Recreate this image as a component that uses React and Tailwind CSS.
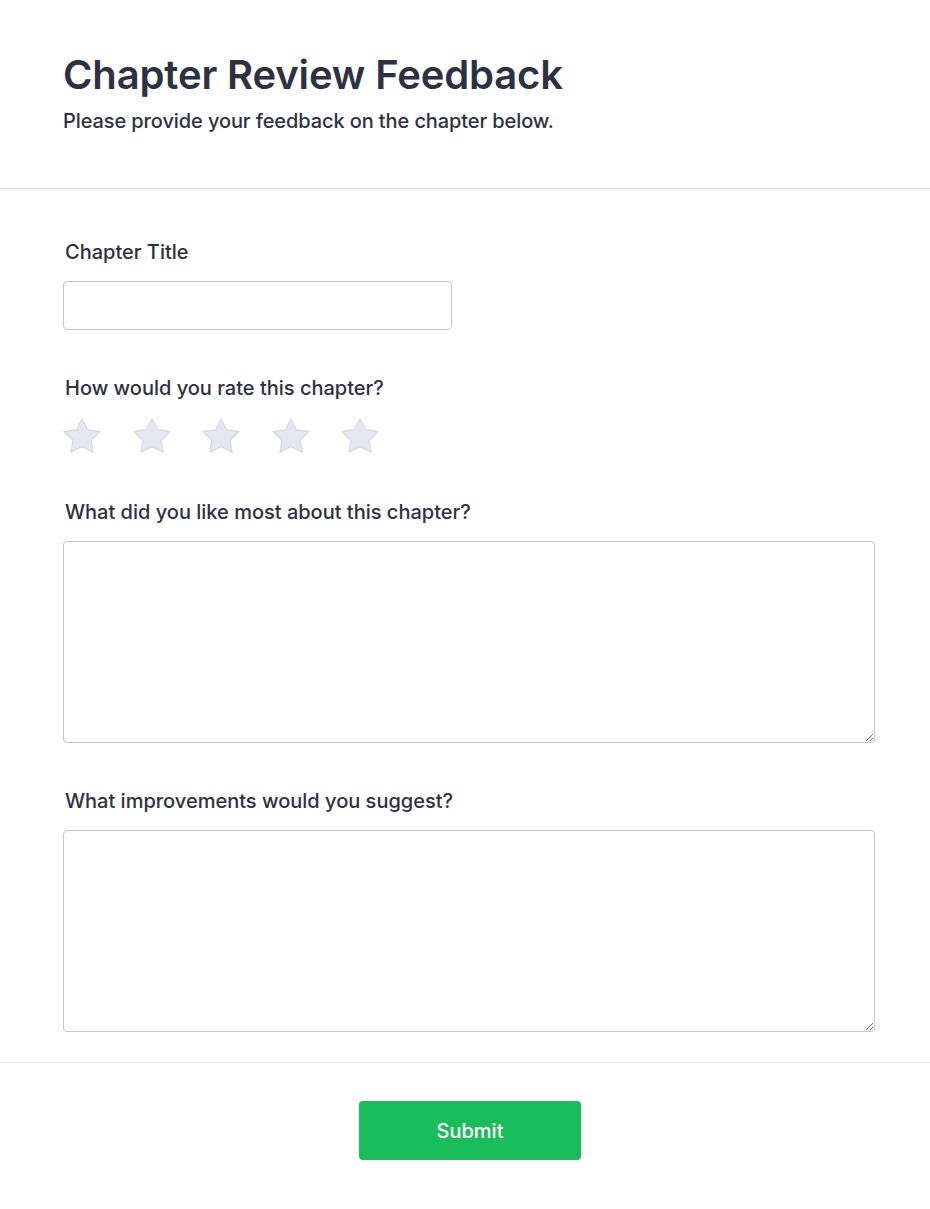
import React from "react";

function Star() {
  return (
    <svg width="38" height="36" viewBox="1.5 1.5 21 20.5" preserveAspectRatio="none">
      <polygon
        points="12,2 15.09,8.26 22,9.27 17,14.14 18.18,21.02 12,17.77 5.82,21.02 7,14.14 2,9.27 8.91,8.26"
        fill="#e5e7f1"
        stroke="#d2d5df"
        strokeWidth="0.6"
        strokeLinejoin="round"
      />
    </svg>
  );
}

export default function App() {
  return (
    <div className="min-h-[1209px] bg-white text-[#2d3142]" style={{ fontFamily: "Inter, 'Noto Sans', sans-serif" }}>
      <header className="px-[63px] pt-[51px] pb-[53px] border-b border-[#d8d9e4]">
        <h1 className="text-[40px] leading-[48px] font-semibold tracking-[-0.15px]">Chapter Review Feedback</h1>
        <p className="text-[20px] leading-[28px] font-medium mt-[8px] tracking-[-0.1px]">Please provide your feedback on the chapter below.</p>
      </header>
      <form className="pl-[63px] pr-[55px] pt-[49px] pb-[30px] border-b border-[#e3e5ee]">
        <div>
          <label className="block pl-[2px] text-[20px] leading-7 font-medium mb-[15px]">Chapter Title</label>
          <input type="text" className="block w-[389px] h-[49px] rounded-[4px] border border-[#c2c5d1] px-3 outline-none" />
        </div>
        <div className="mt-[44px]">
          <label className="block pl-[2px] text-[20px] leading-7 font-medium">How would you rate this chapter?</label>
          <div className="flex gap-[31.5px] mt-[16px]">
            <Star />
            <Star />
            <Star />
            <Star />
            <Star />
          </div>
        </div>
        <div className="mt-[44px]">
          <label className="block pl-[2px] text-[20px] leading-7 font-medium mb-[15px]">What did you like most about this chapter?</label>
          <textarea className="block w-full h-[202px] rounded-[4px] border border-[#c2c5d1] p-3 outline-none" />
        </div>
        <div className="mt-[44px]">
          <label className="block pl-[2px] text-[20px] leading-7 font-medium mb-[15px]">What improvements would you suggest?</label>
          <textarea className="block w-full h-[202px] rounded-[4px] border border-[#c2c5d1] p-3 outline-none" />
        </div>
      </form>
      <div className="flex justify-center pl-[65px] pr-[55px] pt-[38px] pb-[50px]">
        <button type="button" className="w-[222px] h-[59px] rounded-[4px] bg-[#1abd5b] text-white text-[20px] font-medium">Submit</button>
      </div>
    </div>
  );
}
